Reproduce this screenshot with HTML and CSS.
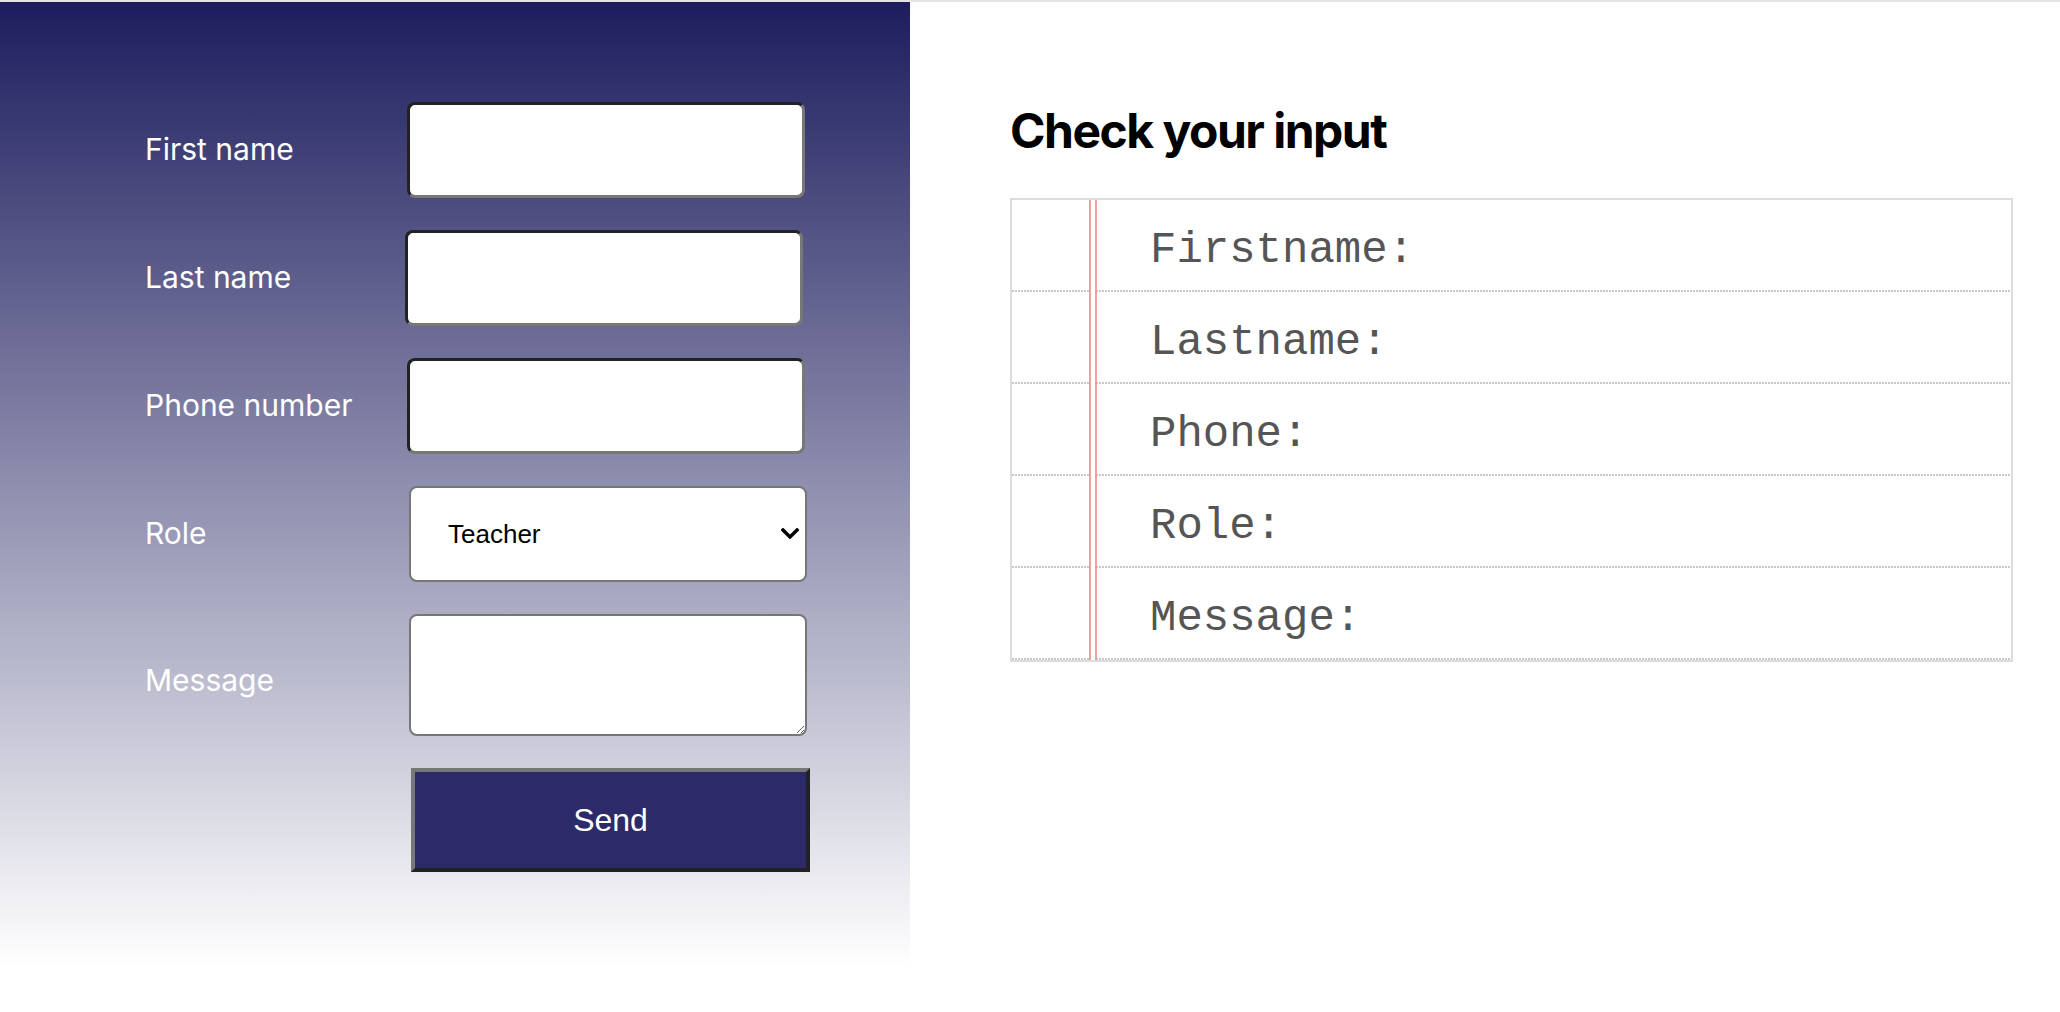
FILE: index.html
```html
<!DOCTYPE html>
<html lang="en">
<head>
<meta charset="utf-8">
<title>Form</title>
<link rel="stylesheet" href="styles.css">
</head>
<body>
<div class="page">
  <section class="form-panel">
    <form class="form-grid">
      <label class="label" for="fn">First name</label>
      <input class="field" id="fn" type="text">
      <label class="label" for="ln">Last name</label>
      <input class="field field-shift" id="ln" type="text">
      <label class="label" for="ph">Phone number</label>
      <input class="field" id="ph" type="text">
      <label class="label" for="role">Role</label>
      <div class="select-wrap">
        <select class="select" id="role">
          <option>Teacher</option>
          <option>Student</option>
          <option>Other</option>
        </select>
        <svg class="chevron" width="18" height="11" viewBox="0 0 18 11"><path d="M2 2 L9 9 L16 2" fill="none" stroke="#000" stroke-width="3.4" stroke-linecap="square" stroke-linejoin="miter"/></svg>
      </div>
      <label class="label label-msg" for="msg">Message</label>
      <textarea class="textarea" id="msg"></textarea>
      <span class="spacer"></span>
      <button class="send" type="button">Send</button>
    </form>
  </section>
  <section class="check-panel">
    <h1 class="check-title">Check your input</h1>
    <div class="notebook">
      <div class="margin-line"></div>
      <div class="note-row">Firstname:</div>
      <div class="note-row">Lastname:</div>
      <div class="note-row">Phone:</div>
      <div class="note-row">Role:</div>
      <div class="note-row">Message:</div>
    </div>
  </section>
</div>
</body>
</html>
```
FILE: styles.css
```css
html, body {
  margin: 0;
  padding: 0;
  background: #fff;
}
body {
  border-top: 2px solid #e3e3e3;
}
.page {
  display: flex;
  align-items: flex-start;
}
.form-panel {
  width: 910px;
  height: 964px;
  box-sizing: border-box;
  padding: 100px 0 0 145px;
  background: linear-gradient(to bottom, #1d1d5e 0%, #ffffff 100%);
}
.form-grid {
  display: grid;
  grid-template-columns: 262px 398px;
  row-gap: 32px;
  align-items: center;
}
.label {
  font-family: Inter, "Noto Sans", sans-serif;
  font-size: 30px;
  color: #fff;
  margin-top: -2px;
}
.label-msg {
  padding-top: 12px;
}
.field {
  width: 398px;
  height: 96px;
  box-sizing: border-box;
  margin: 0;
  border: 3px solid;
  border-color: #222 #777 #777 #222;
  border-radius: 8px;
  background: #fff;
  font-size: 24px;
}
.field-shift {
  margin-left: -2px;
}
.select-wrap {
  position: relative;
  width: 398px;
  height: 96px;
  margin-left: 2px;
}
.select {
  -webkit-appearance: none;
  appearance: none;
  width: 398px;
  height: 96px;
  box-sizing: border-box;
  margin: 0;
  padding: 0 0 0 37px;
  border: 2px solid #767676;
  border-radius: 8px;
  background: #fff;
  color: #000;
  font-family: "Liberation Sans", Arial, sans-serif;
  font-size: 26px;
}
.chevron {
  position: absolute;
  right: 8px;
  top: 42px;
  pointer-events: none;
}
.textarea {
  width: 398px;
  height: 122px;
  box-sizing: border-box;
  margin: 0 0 0 2px;
  border: 2px solid #767676;
  border-radius: 8px;
  background: #fff;
  display: block;
}
.send {
  width: 399px;
  height: 104px;
  box-sizing: border-box;
  margin: 0 0 0 4px;
  border: 4px solid;
  border-color: #777 #222 #222 #777;
  background: #2c2a68;
  color: #fff;
  font-family: "Liberation Sans", Arial, sans-serif;
  font-size: 32px;
  padding: 0;
}
.check-panel {
  flex: 1;
  padding: 100px 47px 0 100px;
}
.check-title {
  margin: 0 0 38px;
  font-family: Inter, "Noto Sans", sans-serif;
  font-weight: 700;
  font-size: 48px;
  line-height: 58px;
  letter-spacing: -1.5px;
  color: #000;
}
.notebook {
  position: relative;
  border: 2px solid #dcdcdc;
}
.margin-line {
  position: absolute;
  top: 0;
  bottom: 0;
  left: 77px;
  width: 4px;
  border-left: 2px solid #efa396;
  border-right: 2px solid #efa396;
  background: #fff;
}
.note-row {
  height: 92px;
  box-sizing: border-box;
  padding: 10px 0 2px 138px;
  display: flex;
  align-items: center;
  font-family: "Liberation Mono", "Courier New", monospace;
  font-size: 44px;
  color: #555;
  background-image: repeating-linear-gradient(to right, #c8c8c8 0 2px, transparent 2px 3px);
  background-size: 100% 2px;
  background-position: left bottom;
  background-repeat: no-repeat;
}
```
